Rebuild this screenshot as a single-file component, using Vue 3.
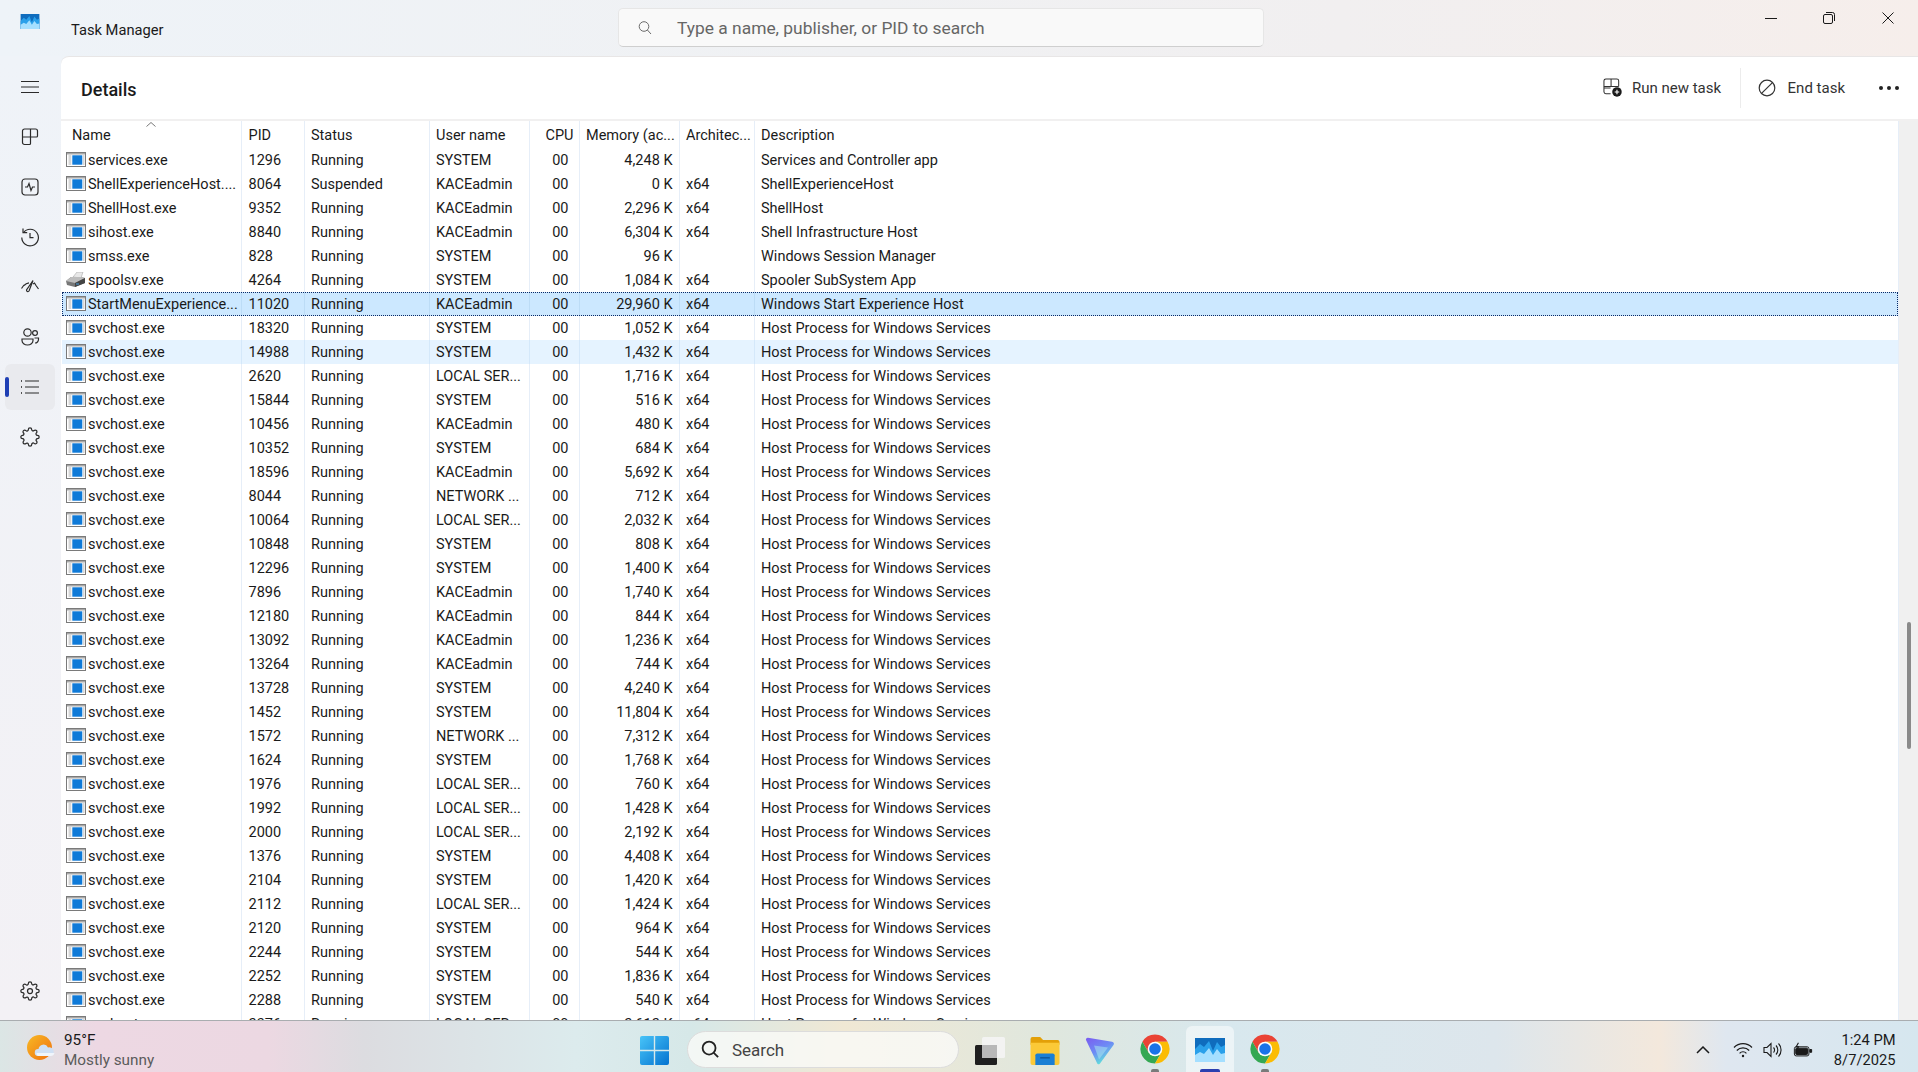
<template>
  <div class="screen">
    <div class="window">
      <header class="titlebar">
        <div class="title-left">
          <svg class="app-icon" viewBox="0 0 30 24">
            <rect width="30" height="24" fill="#0f6cbd" />
            <path d="M0 11l5-5 4 3 5-6 4 10 4-9 4 5 4-2v18H0z" fill="#2aa0ea" />
            <path d="M0 17l5-3 4 2 5-6 4 7 4-6 4 5 4-1v9H0z" fill="#a5dfff" />
          </svg>
          <span class="app-name">Task Manager</span>
        </div>
        <div class="search">
          <svg class="search-ico" viewBox="0 0 16 16" fill="none" stroke="#6b6b6b" stroke-width="1">
            <circle cx="7" cy="6.5" r="4.8" />
            <path d="M10.4 10l3.6 4" />
          </svg>
          <span class="search-text">Type a name, publisher, or PID to search</span>
        </div>
        <div class="winbtns">
          <svg viewBox="0 0 12 12" class="winbtn" fill="none" stroke="#1a1a1a" stroke-width="1">
            <path d="M0 6.5h12" />
          </svg>
          <svg viewBox="0 0 12 12" class="winbtn" fill="none" stroke="#1a1a1a" stroke-width="1">
            <rect x="0.5" y="2.5" width="9" height="9" rx="1.5" />
            <path d="M3 .5h6.5a2 2 0 0 1 2 2V9" />
          </svg>
          <svg viewBox="0 0 12 12" class="winbtn close" fill="none" stroke="#1a1a1a" stroke-width="1">
            <path d="M.5.5l11 11M11.500.5l-11 11" />
          </svg>
        </div>
      </header>

      <div class="body">
        <nav class="sidebar">
          <div class="nav-item">
            <svg viewBox="0 0 20 20" class="nav-ico"><path d="M1 4.500h18M1 10h18M1 15.500h18" /></svg>
          </div>
          <div class="nav-item">
            <svg viewBox="0 0 20 20" class="nav-ico">
              <path d="M2.500 4a2 2 0 0 1 2-2h11a2 2 0 0 1 2 2v5a1 1 0 0 1-1 1h-6v6.500a1 1 0 0 1-1 1h-5a2 2 0 0 1-2-2z" />
              <path d="M10.500 2v8M2.500 10h8" />
            </svg>
          </div>
          <div class="nav-item">
            <svg viewBox="0 0 20 20" class="nav-ico">
              <rect x="2" y="2" width="16" height="16" rx="3" />
              <path d="M5 10h2.500l1.500-3.500 2 7 1.500-3.500H15" />
            </svg>
          </div>
          <div class="nav-item">
            <svg viewBox="0 0 20 20" class="nav-ico">
              <path d="M3.500 5.500a8.300 8.300 0 1 1-1.700 5" />
              <path d="M3 1.500v4.200h4.200M10 6v4.700h3.500" />
            </svg>
          </div>
          <div class="nav-item">
            <svg viewBox="0 0 20 20" class="nav-ico">
              <path d="M1.500 11.500l2.500-3.500M4 8.500a9 9 0 0 1 5-2.700M16 8.500l2.500 3.500M16 8.500l-1.500-2.500-1.500 1" />
              <path d="M13 3.500l-4 10.500a1.400 1.400 0 0 1-2.500-1z" />
            </svg>
          </div>
          <div class="nav-item">
            <svg viewBox="0 0 20 20" class="nav-ico">
              <circle cx="7.500" cy="5.500" r="3.700" />
              <circle cx="15" cy="6" r="2.400" />
              <path d="M2 12h11v1.500a5.500 4.500 0 0 1-11 0z" />
              <path d="M14.500 11h4v1.500a3.500 3.500 0 0 1-3.500 3.500" />
            </svg>
          </div>
          <div class="nav-item active">
            <svg viewBox="0 0 20 20" class="nav-ico">
              <path d="M5 4h14M5 10h14M5 16h14" />
              <path d="M1 4h.8M1 10h.8M1 16h.8" stroke-width="2" />
            </svg>
          </div>
          <div class="nav-item">
            <svg viewBox="0 0 24 24" class="nav-ico thick">
              <path d="M19.400 15a1.650 1.650 0 0 0 .33 1.820l.06.06a2 2 0 0 1 0 2.830 2 2 0 0 1-2.830 0l-.06-.06a1.650 1.650 0 0 0-1.820-.33 1.650 1.650 0 0 0-1 1.510V21a2 2 0 0 1-2 2 2 2 0 0 1-2-2v-.09A1.650 1.650 0 0 0 9 19.400a1.650 1.650 0 0 0-1.820.33l-.06.06a2 2 0 0 1-2.830 0 2 2 0 0 1 0-2.830l.06-.06a1.650 1.650 0 0 0 .33-1.820 1.650 1.650 0 0 0-1.510-1H3a2 2 0 0 1-2-2 2 2 0 0 1 2-2h.09A1.650 1.650 0 0 0 4.600 9a1.650 1.650 0 0 0-.33-1.820l-.06-.06a2 2 0 0 1 0-2.830 2 2 0 0 1 2.830 0l.06.06a1.650 1.650 0 0 0 1.820.33H9a1.650 1.650 0 0 0 1-1.510V3a2 2 0 0 1 2-2 2 2 0 0 1 2 2v.09a1.650 1.650 0 0 0 1 1.510 1.650 1.650 0 0 0 1.820-.33l.06-.06a2 2 0 0 1 2.830 0 2 2 0 0 1 0 2.830l-.06.06a1.650 1.650 0 0 0-.33 1.820V9a1.650 1.650 0 0 0 1.510 1H21a2 2 0 0 1 2 2 2 2 0 0 1-2 2h-.09a1.650 1.650 0 0 0-1.510 1z" />
            </svg>
          </div>
          <div class="nav-item settings">
            <svg viewBox="0 0 24 24" class="nav-ico thick">
              <circle cx="12" cy="12" r="3" />
              <path d="M19.400 15a1.650 1.650 0 0 0 .33 1.820l.06.06a2 2 0 0 1 0 2.830 2 2 0 0 1-2.830 0l-.06-.06a1.650 1.650 0 0 0-1.820-.33 1.650 1.650 0 0 0-1 1.510V21a2 2 0 0 1-2 2 2 2 0 0 1-2-2v-.09A1.650 1.650 0 0 0 9 19.400a1.650 1.650 0 0 0-1.820.33l-.06.06a2 2 0 0 1-2.830 0 2 2 0 0 1 0-2.830l.06-.06a1.650 1.650 0 0 0 .33-1.820 1.650 1.650 0 0 0-1.510-1H3a2 2 0 0 1-2-2 2 2 0 0 1 2-2h.09A1.650 1.650 0 0 0 4.600 9a1.650 1.650 0 0 0-.33-1.820l-.06-.06a2 2 0 0 1 0-2.830 2 2 0 0 1 2.830 0l.06.06a1.650 1.650 0 0 0 1.820.33H9a1.650 1.650 0 0 0 1-1.510V3a2 2 0 0 1 2-2 2 2 0 0 1 2 2v.09a1.650 1.650 0 0 0 1 1.510 1.650 1.650 0 0 0 1.820-.33l.06-.06a2 2 0 0 1 2.830 0 2 2 0 0 1 0 2.830l-.06.06a1.650 1.650 0 0 0-.33 1.820V9a1.650 1.650 0 0 0 1.510 1H21a2 2 0 0 1 2 2 2 2 0 0 1-2 2h-.09a1.650 1.650 0 0 0-1.510 1z" />
            </svg>
          </div>
        </nav>

        <main class="card">
          <div class="toolbar">
            <h1 class="page-title">Details</h1>
            <div class="actions">
              <div class="action">
                <svg viewBox="0 0 20 20" class="action-ico">
                  <path d="M8 16.500H3a2 2 0 0 1-2-2V3a2 2 0 0 1 2-2h11.500a2 2 0 0 1 2 2v6" fill="none" stroke="#333" stroke-width="1.100" />
                  <path d="M8.500 1v8H1M1 10.500h7M8.500 9h8" fill="none" stroke="#333" stroke-width="1.100" />
                  <circle cx="14.700" cy="14.700" r="5" fill="#1a1a1a" />
                  <path d="M12.300 14.700h4.800M14.700 12.300v4.800" stroke="#fff" stroke-width="1.200" />
                </svg>
                <span>Run new task</span>
              </div>
              <div class="action-sep"></div>
              <div class="action end">
                <svg viewBox="0 0 18 18" class="end-ico" fill="none" stroke="#333" stroke-width="1.200">
                  <circle cx="9" cy="9" r="7.800" />
                  <path d="M3.800 14.200L14.200 3.800" />
                </svg>
                <span>End task</span>
              </div>
              <div class="more"><i></i><i></i><i></i></div>
            </div>
          </div>

          <div class="table-area">
            <div class="table">
              <div class="row head">
                <div v-for="col in columns" :key="col.label" class="cell" :class="col.cls">{{ col.label }}</div>
                <svg class="sort-caret" viewBox="0 0 10 5" fill="none" stroke="#555" stroke-width="0.800"><path d="M.5 4.500L5 .5l4.500 4" /></svg>
              </div>
              <div
                v-for="p in processes"
                :key="p.pid"
                class="row"
                :class="{ selected: p.pid === '11020', hovered: p.pid === '14988' }"
              >
                <div class="cell c-name">
                  <svg v-if="p.name === 'spoolsv.exe'" class="proc-ico" viewBox="0 0 20 15">
                    <path d="M7 5l4-5h6l-2 6z" fill="#e8e8e8" stroke="#9a9a9a" stroke-width="0.500" />
                    <path d="M0 9l5-4h10l4 1v5l-10 4-8-2z" fill="#777" />
                    <path d="M0 9l9 2 10-5-4-1H5z" fill="#bdbdbd" />
                    <path d="M9 11v4l10-4V6z" fill="#444" />
                    <path d="M10 12h3" stroke="#4aa0e0" stroke-width="1" />
                  </svg>
                  <svg v-else class="proc-ico" viewBox="0 0 20 15">
                    <rect x="0.500" y="0.500" width="19" height="14" fill="#fff" stroke="#7a7a7a" />
                    <rect x="1" y="1" width="18" height="1.500" fill="#a8a8a8" />
                    <path d="M2.500 4h2.800M2.500 6h2.800M2.500 8h2.800M2.500 10h2.800M2.500 12h2.800M17 4h1.500M17 6h1.500M17 8h1.500M17 10h1.500M17 12h1.500" stroke="#9a9a9a" stroke-width="0.800" />
                    <rect x="6.300" y="3.300" width="10" height="9.400" fill="#0f7ad8" />
                  </svg>
                  <span class="proc-name">{{ p.name }}</span>
                </div>
                <div class="cell c-pid">{{ p.pid }}</div>
                <div class="cell c-status">{{ p.status || 'Running' }}</div>
                <div class="cell c-user">{{ p.user }}</div>
                <div class="cell c-cpu">00</div>
                <div class="cell c-mem">{{ p.mem }} K</div>
                <div class="cell c-arch">{{ p.arch === undefined ? 'x64' : p.arch }}</div>
                <div class="cell c-desc">{{ p.desc || 'Host Process for Windows Services' }}</div>
              </div>
            </div>
            <div class="scrollbar"><div class="thumb"></div></div>
          </div>
        </main>
      </div>
    </div>

    <footer class="taskbar">
      <div class="tb-left">
        <svg class="weather" viewBox="0 0 28 28">
          <defs>
            <linearGradient id="sun" x1="0" y1="0" x2="1" y2="1">
              <stop offset="0" stop-color="#f7b925" />
              <stop offset="1" stop-color="#f0700f" />
            </linearGradient>
          </defs>
          <circle cx="12.500" cy="13.500" r="12.500" fill="url(#sun)" />
          <path d="M11 22a3.500 3.500 0 0 1 .5-7 5 5 0 0 1 9.500-1.500 4.300 4.300 0 0 1 2.500 8.500z" fill="#cfe0f4" />
          <path d="M11 22a3 3 0 0 1-1.500-3h18a4 4 0 0 1-4 3z" fill="#f0f5fb" />
        </svg>
        <div class="weather-text">
          <span class="temp">95°F</span>
          <span class="cond">Mostly sunny</span>
        </div>
      </div>

      <div class="tb-center">
        <div class="tb-btn">
          <svg viewBox="0 0 29 29" class="winlogo">
            <defs>
              <linearGradient id="win" x1="0" y1="0" x2="1" y2="1">
                <stop offset="0" stop-color="#48c4f8" />
                <stop offset="1" stop-color="#0473d0" />
              </linearGradient>
            </defs>
            <path d="M0 2a2 2 0 0 1 2-2h11.800v13.800H0zM15.200 0H27a2 2 0 0 1 2 2v11.800H15.200zM0 15.200h13.800V29H2a2 2 0 0 1-2-2zM15.200 15.200H29V27a2 2 0 0 1-2 2H15.200z" fill="url(#win)" />
          </svg>
        </div>
        <div class="tb-search">
          <svg viewBox="0 0 20 20" class="tb-search-ico" fill="none" stroke="#222" stroke-width="1.900">
            <circle cx="8.500" cy="8.500" r="6.800" />
            <path d="M13.500 13.500L18 18" />
          </svg>
          <span>Search</span>
        </div>
        <div class="tb-btn">
          <svg viewBox="0 0 30 28" class="tb-ico">
            <rect x="0" y="8" width="22" height="20" rx="1.500" fill="#1f1f1f" />
            <rect x="7" y="0" width="23" height="21" rx="1.500" fill="#f4f4f4" opacity="0.900" />
            <rect x="7" y="8" width="15" height="13" fill="#b8b8b8" />
          </svg>
        </div>
        <div class="tb-btn">
          <svg viewBox="0 0 30 29" class="tb-ico">
            <path d="M0 2a2 2 0 0 1 2-2h8l3 3h15a2 2 0 0 1 2 2v3H0z" fill="#e3a008" />
            <path d="M0 6h30v21a2 2 0 0 1-2 2H2a2 2 0 0 1-2-2z" fill="#fbc937" />
            <path d="M5 19a2 2 0 0 1 2-2h16a2 2 0 0 1 2 2v10H5z" fill="#1a7fd4" />
            <rect x="10" y="21" width="10" height="1.200" fill="#0c4e8c" />
          </svg>
        </div>
        <div class="tb-btn">
          <svg viewBox="0 0 30 27" class="tb-ico">
            <defs>
              <linearGradient id="vpn" x1="0" y1="0" x2="0.600" y2="1">
                <stop offset="0" stop-color="#7b5cf0" />
                <stop offset="0.550" stop-color="#6d8cf5" />
                <stop offset="1" stop-color="#5fe8d8" />
              </linearGradient>
            </defs>
            <path d="M1 2.500c-.4-1.500.8-2.500 2-2.300l24 4c1.800.3 2.500 1.800 1.500 3.200L15 26c-1 1.300-2.500 1-3-.4z" fill="url(#vpn)" />
            <path d="M9 8l14 2-9 12z" fill="#a8e6ee" opacity="0.550" />
          </svg>
        </div>
        <div class="tb-btn">
          <svg viewBox="0 0 30 30" class="tb-chrome">
            <path d="M2.440 7.750A14.500 14.500 0 0 1 27.560 7.750H15L8.720 18.630z" fill="#ea4335" />
            <path d="M2.440 7.750L8.720 18.630H21.280L15 29.500A14.500 14.500 0 0 1 2.440 7.750z" fill="#34a853" />
            <path d="M27.560 7.750H15L21.280 18.630 15 29.500A14.500 14.500 0 0 0 27.560 7.750z" fill="#fbbc04" />
            <circle cx="15" cy="15" r="7.300" fill="#fff" />
            <circle cx="15" cy="15" r="5.800" fill="#1a73e8" />
          </svg>
          <i class="dot"></i>
        </div>
        <div class="tb-btn current">
          <svg viewBox="0 0 30 24" class="tb-tm">
            <rect width="30" height="24" fill="#0f6cbd" />
            <path d="M0 11l5-5 4 3 5-6 4 10 4-9 4 5 4-2v18H0z" fill="#2aa0ea" />
            <path d="M0 17l5-3 4 2 5-6 4 7 4-6 4 5 4-1v9H0z" fill="#a5dfff" />
          </svg>
          <i class="dot wide"></i>
        </div>
        <div class="tb-btn">
          <svg viewBox="0 0 30 30" class="tb-chrome">
            <path d="M2.440 7.750A14.500 14.500 0 0 1 27.560 7.750H15L8.720 18.630z" fill="#ea4335" />
            <path d="M2.440 7.750L8.720 18.630H21.280L15 29.500A14.500 14.500 0 0 1 2.440 7.750z" fill="#34a853" />
            <path d="M27.560 7.750H15L21.280 18.630 15 29.500A14.500 14.500 0 0 0 27.560 7.750z" fill="#fbbc04" />
            <circle cx="15" cy="15" r="7.300" fill="#fff" />
            <circle cx="15" cy="15" r="5.800" fill="#1a73e8" />
          </svg>
          <i class="dot"></i>
        </div>
      </div>

      <div class="tb-right">
        <svg viewBox="0 0 14 8" class="tray-chev" fill="none" stroke="#1a1a1a" stroke-width="1.500"><path d="M1 7l6-6 6 6" /></svg>
        <svg viewBox="0 0 20 16" class="tray-ico" fill="none" stroke="#1a1a1a" stroke-width="1.200">
          <path d="M1 5.500a12.500 12.500 0 0 1 18 0M3.800 8.500a8.500 8.500 0 0 1 12.400 0M6.600 11.300a4.500 4.500 0 0 1 6.800 0" />
          <circle cx="10" cy="14" r="1.200" fill="#1a1a1a" stroke="none" />
        </svg>
        <svg viewBox="0 0 20 16" class="tray-ico" fill="none" stroke="#1a1a1a" stroke-width="1.100">
          <path d="M1 5.500h3l4-4v13l-4-4H1z" />
          <path d="M10.500 5.500a3.500 3.500 0 0 1 0 5M13 3.500a6.500 6.500 0 0 1 0 9M15.500 1.500a9.500 9.500 0 0 1 0 13" />
        </svg>
        <svg viewBox="0 0 22 16" class="tray-ico" fill="none" stroke="#1a1a1a" stroke-width="1.100">
          <rect x="1.500" y="4.500" width="16" height="10" rx="2" />
          <rect x="3" y="6" width="13" height="7" rx="1" fill="#1a1a1a" />
          <path d="M18.500 7.500h2v3h-2z" fill="#1a1a1a" />
          <path d="M6 0L3.500 4.500H6L4.500 7.500" stroke-width="1.200" />
        </svg>
        <div class="clock">
          <span>1:24 PM</span>
          <span>8/7/2025</span>
        </div>
      </div>
    </footer>
  </div>
</template>

<script setup>
const columns = [
  { label: 'Name', cls: 'c-name' },
  { label: 'PID', cls: 'c-pid' },
  { label: 'Status', cls: 'c-status' },
  { label: 'User name', cls: 'c-user' },
  { label: 'CPU', cls: 'c-cpu' },
  { label: 'Memory (ac...', cls: 'c-mem' },
  { label: 'Architec...', cls: 'c-arch' },
  { label: 'Description', cls: 'c-desc' },
];

const SYS = 'SYSTEM';
const KACE = 'KACEadmin';
const LOCAL = 'LOCAL SER...';
const NET = 'NETWORK ...';

const svchost = (pid, user, mem) => ({ name: 'svchost.exe', pid, user, mem });

const processes = [
  { name: 'services.exe', pid: '1296', user: SYS, mem: '4,248', arch: '', desc: 'Services and Controller app' },
  { name: 'ShellExperienceHost....', pid: '8064', status: 'Suspended', user: KACE, mem: '0', desc: 'ShellExperienceHost' },
  { name: 'ShellHost.exe', pid: '9352', user: KACE, mem: '2,296', desc: 'ShellHost' },
  { name: 'sihost.exe', pid: '8840', user: KACE, mem: '6,304', desc: 'Shell Infrastructure Host' },
  { name: 'smss.exe', pid: '828', user: SYS, mem: '96', arch: '', desc: 'Windows Session Manager' },
  { name: 'spoolsv.exe', pid: '4264', user: SYS, mem: '1,084', desc: 'Spooler SubSystem App' },
  { name: 'StartMenuExperience...', pid: '11020', user: KACE, mem: '29,960', desc: 'Windows Start Experience Host' },
  svchost('18320', SYS, '1,052'),
  svchost('14988', SYS, '1,432'),
  svchost('2620', LOCAL, '1,716'),
  svchost('15844', SYS, '516'),
  svchost('10456', KACE, '480'),
  svchost('10352', SYS, '684'),
  svchost('18596', KACE, '5,692'),
  svchost('8044', NET, '712'),
  svchost('10064', LOCAL, '2,032'),
  svchost('10848', SYS, '808'),
  svchost('12296', SYS, '1,400'),
  svchost('7896', KACE, '1,740'),
  svchost('12180', KACE, '844'),
  svchost('13092', KACE, '1,236'),
  svchost('13264', KACE, '744'),
  svchost('13728', SYS, '4,240'),
  svchost('1452', SYS, '11,804'),
  svchost('1572', NET, '7,312'),
  svchost('1624', SYS, '1,768'),
  svchost('1976', LOCAL, '760'),
  svchost('1992', LOCAL, '1,428'),
  svchost('2000', LOCAL, '2,192'),
  svchost('1376', SYS, '4,408'),
  svchost('2104', SYS, '1,420'),
  svchost('2112', LOCAL, '1,424'),
  svchost('2120', SYS, '964'),
  svchost('2244', SYS, '544'),
  svchost('2252', SYS, '1,836'),
  svchost('2288', SYS, '540'),
  svchost('2376', LOCAL, '2,612'),
];
</script>

<style>
html, body {
  margin: 0;
  overflow: hidden;
}
</style>

<style scoped>
.screen {
  width: 1918px;
  height: 1072px;
  display: flex;
  flex-direction: column;
  overflow: hidden;
  font-family: Roboto, "Liberation Sans", sans-serif;
  font-size: 14.5px;
  color: #1a1a1a;
}

.window {
  flex: 1;
  min-height: 0;
  display: flex;
  flex-direction: column;
  background: linear-gradient(90deg, #eef3f8 0%, #f0f1f3 45%, #f1eff0 70%, #f6eeeb 100%);
}

.titlebar {
  height: 56px;
  flex-shrink: 0;
  display: flex;
  position: relative;
}

.title-left {
  width: 618px;
  display: flex;
  align-items: flex-start;
  padding-left: 20px;
  box-sizing: border-box;
}

.app-icon {
  width: 20px;
  height: 15px;
  margin-top: 14px;
}

.app-name {
  margin-left: 31px;
  margin-top: 21px;
  font-size: 14.7px;
}

.search {
  width: 646px;
  height: 39px;
  margin-top: 8px;
  box-sizing: border-box;
  background: #f9f9f9;
  border: 1px solid #e6e6e6;
  border-bottom-color: #cfcfcf;
  border-radius: 5px;
  display: flex;
  align-items: center;
  padding-left: 18px;
}

.search-ico {
  width: 16px;
  height: 16px;
}

.search-text {
  margin-left: 24px;
  font-size: 17.4px;
  color: #666;
}

.winbtns {
  margin-left: auto;
  display: flex;
  gap: 46px;
  padding: 12px 24px 0 0;
}

.winbtn {
  width: 12px;
  height: 12px;
}

.winbtn.close {
  margin-left: 1px;
}

.body {
  flex: 1;
  min-height: 0;
  display: flex;
}

.sidebar {
  width: 61px;
  flex-shrink: 0;
  padding: 8px 0 6px 5px;
  box-sizing: border-box;
  display: flex;
  flex-direction: column;
  gap: 4px;
  background: linear-gradient(180deg, #eff3f8 0%, #f3f1f5 100%);
}

.nav-item {
  width: 50px;
  height: 46px;
  flex-shrink: 0;
  display: flex;
  align-items: center;
  justify-content: center;
  border-radius: 6px;
  position: relative;
}

.nav-item.active {
  background: #e9eaee;
}

.nav-item.active::before {
  content: "";
  position: absolute;
  left: 0;
  top: 13px;
  width: 4px;
  height: 20px;
  border-radius: 2px;
  background: #1f3fb4;
}

.nav-item.settings {
  margin-top: auto;
}

.nav-ico {
  width: 20px;
  height: 20px;
  fill: none;
  stroke: #2b2b2b;
  stroke-width: 1.200;
}

.nav-ico.thick {
  stroke-width: 1.500;
}

.card {
  flex: 1;
  min-width: 0;
  display: flex;
  flex-direction: column;
  background: #fff;
  border-top: 1px solid #e8e6e6;
  border-top-left-radius: 8px;
  overflow: hidden;
}

.toolbar {
  height: 62px;
  flex-shrink: 0;
  display: flex;
  align-items: center;
  padding: 0 19px 0 20px;
  border-bottom: 2px solid #f1f0f0;
}

.page-title {
  margin: 2px 0 0;
  font-size: 18px;
  font-weight: 500;
}

.actions {
  margin-left: auto;
  margin-top: -1px;
  display: flex;
  align-items: center;
}

.action {
  display: flex;
  align-items: center;
  gap: 10px;
  font-size: 15px;
  color: #333;
}

.action-ico {
  width: 19px;
  height: 19px;
}

.end-ico {
  width: 18px;
  height: 18px;
}

.action-sep {
  width: 1px;
  height: 40px;
  background: #ececec;
  margin: 0 16.500px 0 19px;
}

.action.end {
  gap: 12px;
}

.more {
  display: flex;
  gap: 4px;
  margin-left: 34px;
}

.more i {
  width: 4px;
  height: 4px;
  border-radius: 50%;
  background: #222;
}

.table-area {
  flex: 1;
  min-height: 0;
  display: flex;
  overflow: hidden;
}

.table {
  flex: 1;
  min-width: 0;
  border-right: 1px solid #e6eef8;
}

.row {
  display: grid;
  grid-template-columns: 181px 62.500px 125px 100px 50px 100px 75px 1fr;
  height: 24px;
  align-items: stretch;
  box-sizing: border-box;
  position: relative;
}

.row.head {
  height: 27px;
}

.row.selected {
  background: #cce8ff;
  outline: 1px dotted #0a2a66;
  outline-offset: -1px;
  margin-left: 1px;
  grid-template-columns: 180px 62.500px 125px 100px 50px 100px 75px 1fr;
}

.row.hovered {
  background: #e5f3ff;
  margin-left: 1px;
  grid-template-columns: 180px 62.500px 125px 100px 50px 100px 75px 1fr;
}

.cell {
  display: flex;
  align-items: center;
  border-right: 1px solid #e6eef8;
  padding-left: 6.500px;
  white-space: nowrap;
  overflow: hidden;
}

.row.selected .cell {
  border-right-color: #bcdcf6;
}

.row.hovered .cell {
  border-right-color: #d4e8fa;
}

.head .cell {
  padding-top: 1px;
}

.row .c-name {
  padding-left: 5px;
}

.head .cell.c-name {
  padding-left: 11px;
}

.row.selected .c-name,
.row.hovered .c-name {
  padding-left: 4px;
}

.c-cpu {
  justify-content: flex-end;
  padding: 0 10px 0 0;
}

.head .c-cpu {
  padding-right: 5px;
}

.c-mem {
  justify-content: flex-end;
  padding: 0 6px 0 0;
}

.head .c-mem {
  justify-content: flex-start;
  padding: 1px 0 0 6.500px;
}

.c-desc {
  border-right: none;
}

.proc-ico {
  width: 20px;
  height: 15px;
  flex-shrink: 0;
  margin-bottom: 2px;
}

.proc-name {
  margin-left: 2px;
}

.sort-caret {
  position: absolute;
  left: 85px;
  top: 1px;
  width: 10px;
  height: 5px;
}

.scrollbar {
  width: 19px;
  flex-shrink: 0;
  background: #f0f0f0;
  padding-top: 501px;
  box-sizing: border-box;
  display: flex;
  justify-content: center;
}

.thumb {
  width: 4px;
  height: 127px;
  background: #8a8a8a;
  border-radius: 2px;
}

.taskbar {
  height: 52px;
  flex-shrink: 0;
  box-sizing: border-box;
  border-top: 1px solid #a9adb0;
  display: flex;
  background: linear-gradient(90deg, #dbe6e5 0%, #edd8e3 5%, #ecd8e2 14%, #dcdce0 19%, #dcebed 30%, #d6e8e8 36%, #f0e8d4 44%, #dfe7de 55%, #d8e8ee 64%, #dde6ec 78%, #f3e8dc 86.500%, #dfe7f0 90%, #d6e7ef 100%);
}

.tb-left {
  width: 630px;
  flex-shrink: 0;
  display: flex;
  align-items: center;
  padding: 6px 0 0 27px;
  box-sizing: border-box;
}

.weather {
  width: 28px;
  height: 28px;
  margin-top: -3px;
}

.weather-text {
  display: flex;
  flex-direction: column;
  margin-left: 9px;
  font-size: 15.3px;
  line-height: 20px;
}

.cond {
  color: #5b5b5b;
}

.tb-center {
  display: flex;
  align-items: center;
  gap: 7px;
}

.tb-btn {
  width: 48px;
  height: 46px;
  margin-top: 5px;
  display: flex;
  align-items: center;
  justify-content: center;
  border-radius: 6px 6px 0 0;
  position: relative;
}

.tb-btn.current {
  background: rgba(255, 255, 255, 0.5);
}

.winlogo {
  width: 29px;
  height: 29px;
  margin-top: 3px;
}

.tb-ico {
  width: 30px;
  height: 28px;
  margin-top: 3px;
}

.tb-chrome {
  width: 30px;
  height: 30px;
}

.tb-tm {
  width: 30px;
  height: 24px;
  margin-top: 2px;
}

.dot {
  position: absolute;
  bottom: 0;
  left: 20px;
  width: 8px;
  height: 3px;
  border-radius: 2px 2px 0 0;
  background: #7a7a7a;
}

.dot.wide {
  left: 14px;
  width: 20px;
  background: #2a3fb0;
}

.tb-search {
  width: 272px;
  height: 37px;
  box-sizing: border-box;
  border-radius: 19px;
  border: 1px solid #dcdcdc;
  background: rgba(250, 250, 248, 0.8);
  display: flex;
  align-items: center;
  padding-left: 13px;
  font-size: 17px;
  color: #444;
  margin-left: 2px;
  margin-top: 6px;
}

.tb-search-ico {
  width: 19px;
  height: 19px;
  margin-right: 12px;
}

.tb-right {
  margin-left: auto;
  display: flex;
  align-items: center;
  padding: 6px 22.500px 0 0;
}

.tray-chev {
  width: 14px;
  height: 8px;
  margin-right: 23px;
}

.tray-ico {
  width: 20px;
  height: 16px;
  margin-right: 10px;
}

.clock {
  display: flex;
  flex-direction: column;
  align-items: flex-end;
  margin-left: 11px;
  font-size: 14.7px;
  line-height: 20px;
}
</style>
